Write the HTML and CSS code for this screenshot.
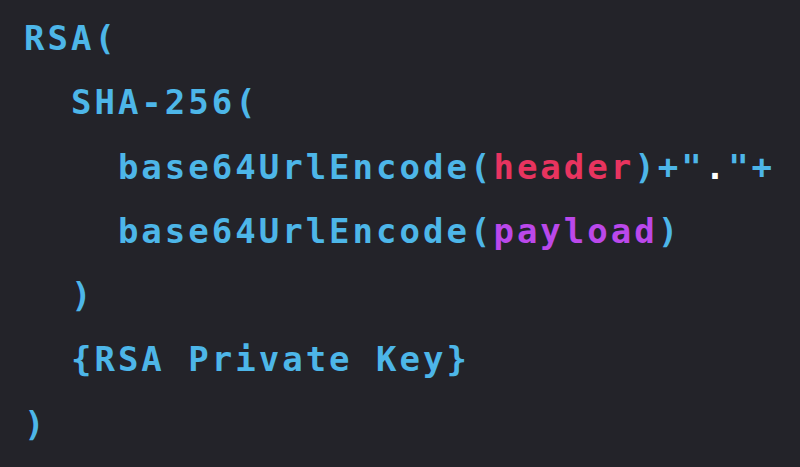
FILE: index.html
```html
<!DOCTYPE html>
<html>
<head>
<meta charset="utf-8">
<link rel="stylesheet" href="styles.css">
</head>
<body>
<pre class="code"><span class="fn">RSA(</span>
<span class="fn">  SHA-256(</span>
<span class="fn">    base64UrlEncode(</span><span class="hdr">header</span><span class="fn">)+"</span><span class="dot">.</span><span class="fn">"+</span>
<span class="fn">    base64UrlEncode(</span><span class="pl">payload</span><span class="fn">)</span>
<span class="fn">  )</span>
<span class="fn">  {RSA Private Key}</span>
<span class="fn">)</span></pre>
</body>
</html>
```
FILE: styles.css
```css
html, body {
  margin: 0;
  padding: 0;
  background: #232329;
  width: 800px;
  height: 467px;
  overflow: hidden;
}
.code {
  margin: 0;
  padding: 6px 0 0 24px;
  font-family: "DejaVu Sans Mono", monospace;
  font-weight: bold;
  font-size: 34px;
  letter-spacing: 3px;
  line-height: 64.3px;
  color: #4db6e8;
}
.fn { color: #4db6e8; }
.hdr { color: #e8345f; }
.pl { color: #bb48ea; }
.dot { color: #ffffff; }
```
